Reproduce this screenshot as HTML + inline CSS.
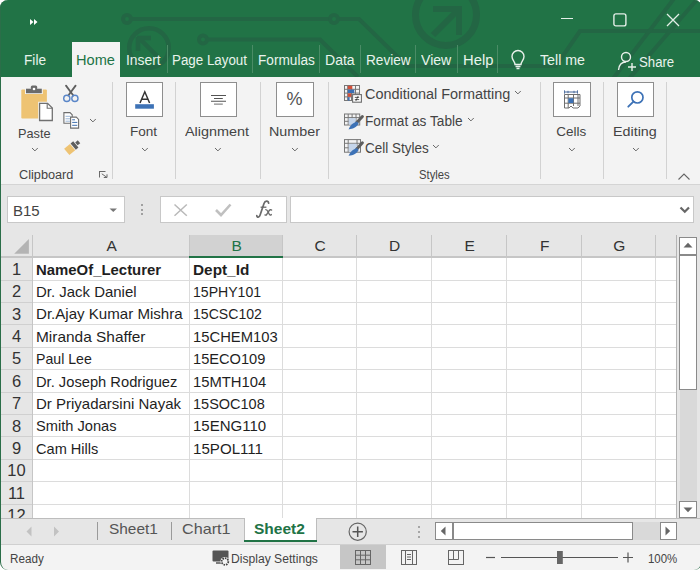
<!DOCTYPE html>
<html><head><meta charset="utf-8">
<style>
html,body{margin:0;padding:0;width:700px;height:572px;overflow:hidden;background:#fff;}
body{position:relative;font-family:"Liberation Sans",sans-serif;}
.a{position:absolute;white-space:nowrap;}
#win{position:absolute;left:0;top:0;width:702px;height:570px;border-radius:8px;overflow:hidden;background:#f3f3f3;}
#wb{position:absolute;left:0;top:0;width:702px;height:570px;border-radius:8px;border-left:1.2px solid #2b6e49;border-right:1.2px solid #2b6e49;box-sizing:border-box;}
svg{position:absolute;overflow:visible;}
</style></head><body><div id="win">
<div class="a" style="left:0px;top:0px;width:700px;height:77px;background:#217346;"></div>
<svg style="left:0;top:0;overflow:hidden" width="700" height="77" viewBox="0 0 700 77">
<g fill="none" stroke="#236644" stroke-width="4">
<circle cx="127" cy="19" r="4"/>
<path d="M131 19 H330 M338 19 H359 L407 66 H556 L580 31 H700"/>
<circle cx="334" cy="19" r="4"/>
<circle cx="203" cy="39.5" r="4"/>
<path d="M207 39.5 H320 L358 77"/>
<circle cx="149" cy="48" r="19.8" stroke-width="4.5"/>
<path d="M139 38 L160 59 M137 38 H151 M138 37 V51" stroke-width="4.5"/>
<circle cx="446" cy="15" r="30.5" stroke-width="7"/>
<path d="M459 9 L433 35 M462 9 H433 M459 6 V35" stroke-width="6"/>
<path d="M612 80 L676 -4 M628 80 L700 -4"/>
</g></svg>
<svg style="left:30px;top:19px" width="8" height="6" viewBox="0 0 8 6"><path d="M0 0 L3.5 3 L0 6Z M4 0 L7.5 3 L4 6Z" fill="#fff"/></svg>
<div class="a" style="left:561px;top:17.5px;width:12px;height:1.3px;background:#e3eee7;"></div>
<svg style="left:613px;top:13px" width="14" height="14" viewBox="0 0 14 14"><rect x="0.9" y="0.9" width="12" height="12" rx="2" fill="none" stroke="#e3eee7" stroke-width="1.4"/></svg>
<svg style="left:666px;top:13px" width="14" height="14" viewBox="0 0 14 14"><path d="M1 1 L13 13 M13 1 L1 13" stroke="#e3eee7" stroke-width="1.3"/></svg>
<div class="a" style="left:72px;top:42px;width:48px;height:36px;background:#f3f3f3;"></div>
<div class="a" style="left:23.70px;top:50.87px;font-size:14px;line-height:18px;color:#e9f3ed;transform:scaleX(0.9760);transform-origin:0 0;">File</div>
<div class="a" style="left:76.00px;top:50.87px;font-size:14px;line-height:18px;color:#217346;transform:scaleX(1.0420);transform-origin:0 0;">Home</div>
<div class="a" style="left:125.80px;top:50.87px;font-size:14px;line-height:18px;color:#e9f3ed;transform:scaleX(0.9880);transform-origin:0 0;">Insert</div>
<div class="a" style="left:172.00px;top:50.87px;font-size:14px;line-height:18px;color:#e9f3ed;transform:scaleX(0.9540);transform-origin:0 0;">Page Layout</div>
<div class="a" style="left:257.70px;top:50.87px;font-size:14px;line-height:18px;color:#e9f3ed;transform:scaleX(0.9750);transform-origin:0 0;">Formulas</div>
<div class="a" style="left:325.30px;top:50.87px;font-size:14px;line-height:18px;color:#e9f3ed;transform:scaleX(1.0030);transform-origin:0 0;">Data</div>
<div class="a" style="left:365.90px;top:50.87px;font-size:14px;line-height:18px;color:#e9f3ed;transform:scaleX(0.9730);transform-origin:0 0;">Review</div>
<div class="a" style="left:420.70px;top:50.87px;font-size:14px;line-height:18px;color:#e9f3ed;transform:scaleX(1.0070);transform-origin:0 0;">View</div>
<div class="a" style="left:462.50px;top:50.87px;font-size:14px;line-height:18px;color:#e9f3ed;transform:scaleX(1.0560);transform-origin:0 0;">Help</div>
<div class="a" style="left:540.00px;top:50.87px;font-size:14px;line-height:18px;color:#e9f3ed;transform:scaleX(1.0140);transform-origin:0 0;">Tell me</div>
<div class="a" style="left:638.70px;top:52.77px;font-size:14px;line-height:18px;color:#e9f3ed;transform:scaleX(0.9420);transform-origin:0 0;">Share</div>
<div class="a" style="left:167px;top:45px;width:1px;height:28px;background:#4a8c66;"></div>
<div class="a" style="left:252px;top:45px;width:1px;height:28px;background:#4a8c66;"></div>
<div class="a" style="left:319px;top:45px;width:1px;height:28px;background:#4a8c66;"></div>
<div class="a" style="left:360px;top:45px;width:1px;height:28px;background:#4a8c66;"></div>
<div class="a" style="left:415px;top:45px;width:1px;height:28px;background:#4a8c66;"></div>
<div class="a" style="left:457px;top:45px;width:1px;height:28px;background:#4a8c66;"></div>
<div class="a" style="left:497px;top:45px;width:1px;height:28px;background:#4a8c66;"></div>
<svg style="left:510px;top:50px" width="16" height="20" viewBox="0 0 16 20"><path d="M5 14.5 C5 11.5 2 10 2 6.5 A6 6 0 0 1 14 6.5 C14 10 11 11.5 11 14.5 Z M5.5 16.5 H10.5 M6.5 18.5 H9.5" fill="none" stroke="#e8f0ea" stroke-width="1.4"/></svg>
<svg style="left:617px;top:51px" width="20" height="20" viewBox="0 0 20 20"><circle cx="9" cy="6" r="4.5" fill="none" stroke="#e8f0ea" stroke-width="1.4"/><path d="M1.5 19 C2 14 5 11 9 11" fill="none" stroke="#e8f0ea" stroke-width="1.4"/><path d="M15 12 V20 M11 16 H19" stroke="#e8f0ea" stroke-width="1.4"/></svg>
<div class="a" style="left:0px;top:77px;width:700px;height:107px;background:#f3f3f3;"></div>
<div class="a" style="left:0px;top:184px;width:700px;height:1px;background:#d4d4d4;"></div>
<div class="a" style="left:112px;top:82px;width:1px;height:97px;background:#d2d2d2;"></div>
<div class="a" style="left:175px;top:82px;width:1px;height:97px;background:#d2d2d2;"></div>
<div class="a" style="left:260px;top:82px;width:1px;height:97px;background:#d2d2d2;"></div>
<div class="a" style="left:328px;top:82px;width:1px;height:97px;background:#d2d2d2;"></div>
<div class="a" style="left:540px;top:82px;width:1px;height:97px;background:#d2d2d2;"></div>
<div class="a" style="left:603px;top:82px;width:1px;height:97px;background:#d2d2d2;"></div>
<div class="a" style="left:666px;top:82px;width:1px;height:97px;background:#d2d2d2;"></div>
<div class="a" style="left:126px;top:82px;width:37px;height:35px;background:#fff;border:1px solid #8e8e8e;box-sizing:border-box;"></div>
<div class="a" style="left:200px;top:82px;width:37px;height:35px;background:#fff;border:1px solid #8e8e8e;box-sizing:border-box;"></div>
<div class="a" style="left:276px;top:82px;width:38px;height:35px;background:#fff;border:1px solid #8e8e8e;box-sizing:border-box;"></div>
<div class="a" style="left:553px;top:82px;width:38px;height:35px;background:#fff;border:1px solid #8e8e8e;box-sizing:border-box;"></div>
<div class="a" style="left:617px;top:82px;width:37px;height:35px;background:#fff;border:1px solid #8e8e8e;box-sizing:border-box;"></div>
<div class="a" style="left:17.90px;top:124.64px;font-size:13.5px;line-height:17px;color:#444444;transform:scaleX(0.9420);transform-origin:0 0;">Paste</div>
<div class="a" style="left:130.20px;top:123.14px;font-size:13.5px;line-height:17px;color:#444444;transform:scaleX(1.0040);transform-origin:0 0;">Font</div>
<div class="a" style="left:185.00px;top:123.34px;font-size:13.5px;line-height:17px;color:#444444;transform:scaleX(1.0670);transform-origin:0 0;">Alignment</div>
<div class="a" style="left:268.90px;top:123.34px;font-size:13.5px;line-height:17px;color:#444444;transform:scaleX(1.0600);transform-origin:0 0;">Number</div>
<div class="a" style="left:556.30px;top:123.24px;font-size:13.5px;line-height:17px;color:#444444;transform:scaleX(1.0000);transform-origin:0 0;">Cells</div>
<div class="a" style="left:612.80px;top:123.24px;font-size:13.5px;line-height:17px;color:#444444;transform:scaleX(1.0600);transform-origin:0 0;">Editing</div>
<div class="a" style="left:365.40px;top:85.27px;font-size:14px;line-height:18px;color:#444444;transform:scaleX(1.0310);transform-origin:0 0;">Conditional Formatting</div>
<div class="a" style="left:365.40px;top:112.07px;font-size:14px;line-height:18px;color:#444444;transform:scaleX(0.9750);transform-origin:0 0;">Format as Table</div>
<div class="a" style="left:365.40px;top:138.97px;font-size:14px;line-height:18px;color:#444444;transform:scaleX(0.9620);transform-origin:0 0;">Cell Styles</div>
<div class="a" style="left:19.00px;top:167.27px;font-size:12.5px;line-height:16px;color:#444444;transform:scaleX(1.0170);transform-origin:0 0;">Clipboard</div>
<div class="a" style="left:418.50px;top:167.27px;font-size:12.5px;line-height:16px;color:#444444;transform:scaleX(0.9000);transform-origin:0 0;">Styles</div>
<svg style="left:30.700000000000003px;top:147.05px" width="7.8" height="4.9" viewBox="-3.9 -2.45 7.8 4.9"><path d="M-2.9 -1.45 L0 1.45 L2.9 -1.45" fill="none" stroke="#666" stroke-width="1"/></svg>
<svg style="left:140.5px;top:147.05px" width="7.8" height="4.9" viewBox="-3.9 -2.45 7.8 4.9"><path d="M-2.9 -1.45 L0 1.45 L2.9 -1.45" fill="none" stroke="#666" stroke-width="1"/></svg>
<svg style="left:214.1px;top:147.05px" width="7.8" height="4.9" viewBox="-3.9 -2.45 7.8 4.9"><path d="M-2.9 -1.45 L0 1.45 L2.9 -1.45" fill="none" stroke="#666" stroke-width="1"/></svg>
<svg style="left:290.6px;top:147.05px" width="7.8" height="4.9" viewBox="-3.9 -2.45 7.8 4.9"><path d="M-2.9 -1.45 L0 1.45 L2.9 -1.45" fill="none" stroke="#666" stroke-width="1"/></svg>
<svg style="left:568.1px;top:147.05px" width="7.8" height="4.9" viewBox="-3.9 -2.45 7.8 4.9"><path d="M-2.9 -1.45 L0 1.45 L2.9 -1.45" fill="none" stroke="#666" stroke-width="1"/></svg>
<svg style="left:631.6px;top:147.05px" width="7.8" height="4.9" viewBox="-3.9 -2.45 7.8 4.9"><path d="M-2.9 -1.45 L0 1.45 L2.9 -1.45" fill="none" stroke="#666" stroke-width="1"/></svg>
<svg style="left:89.39999999999999px;top:117.95px" width="7.8" height="4.9" viewBox="-3.9 -2.45 7.8 4.9"><path d="M-2.9 -1.45 L0 1.45 L2.9 -1.45" fill="none" stroke="#666" stroke-width="1"/></svg>
<svg style="left:513.8000000000001px;top:90.25px" width="7.8" height="4.9" viewBox="-3.9 -2.45 7.8 4.9"><path d="M-2.9 -1.45 L0 1.45 L2.9 -1.45" fill="none" stroke="#666" stroke-width="1"/></svg>
<svg style="left:466.70000000000005px;top:117.05px" width="7.8" height="4.9" viewBox="-3.9 -2.45 7.8 4.9"><path d="M-2.9 -1.45 L0 1.45 L2.9 -1.45" fill="none" stroke="#666" stroke-width="1"/></svg>
<svg style="left:432.40000000000003px;top:144.05px" width="7.8" height="4.9" viewBox="-3.9 -2.45 7.8 4.9"><path d="M-2.9 -1.45 L0 1.45 L2.9 -1.45" fill="none" stroke="#666" stroke-width="1"/></svg>
<svg style="left:677px;top:172px" width="14" height="9" viewBox="0 0 14 9"><path d="M1.5 7.5 L7 2 L12.5 7.5" fill="none" stroke="#666" stroke-width="1.1"/></svg>
<svg style="left:0;top:0" width="120" height="180" viewBox="0 0 120 180">
<rect x="21.3" y="89.4" width="25.6" height="29.2" rx="1" fill="#eec373"/>
<rect x="25" y="87.7" width="17.8" height="6.3" fill="#f3f3f3"/>
<rect x="26" y="88.7" width="15.8" height="4.5" fill="#6b6b6b"/>
<rect x="30.8" y="85.6" width="6.4" height="4" rx="1.5" fill="#6b6b6b"/>
<circle cx="34" cy="89" r="1.3" fill="#fff"/>
<path d="M38.2 101.8 H48 L53.8 107.6 V122 H38.2 Z" fill="#f3f3f3"/>
<path d="M39.6 103.3 H47.6 L52.3 108 V120.5 H39.6 Z" fill="#fff" stroke="#707070" stroke-width="1.3"/>
<path d="M47.2 103.3 V108.3 H52.3" fill="none" stroke="#707070" stroke-width="1.1"/>
<g stroke="#5f5f5f" stroke-linecap="round">
<path d="M66 85.6 L73.3 95.5" stroke-width="1.8"/>
<path d="M75.6 85.6 L68.3 95.5" stroke-width="1.8"/>
</g>
<circle cx="66.8" cy="98.4" r="3.1" fill="none" stroke="#5a86c8" stroke-width="1.4"/>
<circle cx="74.9" cy="98.4" r="3.1" fill="none" stroke="#5a86c8" stroke-width="1.4"/>
<path d="M63.9 112.6 H70 L72.2 114.8 V123.3 H63.9 Z" fill="#fff" stroke="#6e6e6e" stroke-width="1.1"/>
<path d="M65.5 116.3 H70.5 M65.5 118.8 H70.5 M65.5 121.2 H70" stroke="#9ab6d6" stroke-width="1"/>
<path d="M70.6 117.1 H76.3 L78.6 119.4 V128.1 H70.6 Z" fill="#fff" stroke="#6e6e6e" stroke-width="1.1"/>
<path d="M72.2 119.8 H75 M72.2 122.4 H77.3 M72.2 125.3 H77.3" stroke="#3f6fae" stroke-width="1"/>
<g transform="translate(2.2 -1.4) rotate(-40 72 147)">
<rect x="62.2" y="143" width="7.6" height="8.2" fill="#eec373"/>
<rect x="70.6" y="143" width="3.4" height="8.2" fill="#5f5f5f"/>
<rect x="74.8" y="145.2" width="3.4" height="3.8" fill="#5f5f5f"/>
</g>
<path d="M99 171.5 H105.5 M99.5 171.5 V177.5 M101.8 173.8 L106.8 177.3 M107 174.3 V177.5 H103.8" fill="none" stroke="#6a6a6a" stroke-width="1"/>
</svg>
<svg style="left:0;top:0" width="700" height="180" viewBox="0 0 700 180">
<path d="M140 103 L144.8 91.8 L149.6 103 M141.7 99.2 H147.9" fill="none" stroke="#333" stroke-width="1.5"/>
<rect x="135.2" y="104.2" width="18.7" height="4.5" fill="#3d72b6"/>
<g stroke="#555" stroke-width="1.1">
<path d="M211 95.5 H226 M214 98.5 H222.8 M211 101.3 H226"/>
<path d="M214 104.1 H222.8" stroke="#888"/>
</g>
<g fill="none" stroke="#777" stroke-width="1">
<rect x="344.5" y="85.5" width="15" height="15"/>
<path d="M344.5 89.3 H359.5 M344.5 93.1 H359.5 M344.5 96.9 H352 M347.7 85.5 V100.5 M351.5 85.5 V100.5 M355.5 85.5 V94"/>
</g>
<rect x="347.8" y="85.8" width="4.5" height="3.4" fill="#d24f3a"/>
<rect x="347.8" y="89.6" width="6.5" height="3.4" fill="#3c6fb4"/>
<rect x="347.8" y="93.4" width="3.5" height="3.4" fill="#d24f3a"/>
<rect x="347.8" y="97.2" width="1.8" height="3.4" fill="#3c6fb4"/>
<rect x="352.6" y="94.6" width="8.8" height="7.6" fill="#fff" stroke="#6e6e6e" stroke-width="1.1"/>
<path d="M354.8 97.4 H359.2 M354.8 99.6 H359.2 M358.2 96 L355.8 101" stroke="#333" stroke-width="0.8"/>
<g fill="none" stroke="#777" stroke-width="1">
<rect x="344.5" y="114" width="15.2" height="11"/>
<path d="M344.5 117.6 H359.7 M344.5 121.3 H357 M348.2 114 V125 M352.1 114 V125 M356 114 V123"/>
</g>
<rect x="348.7" y="118.1" width="7" height="6.5" fill="#c5d5ea"/>
<path d="M362.4 116.6 L356.6 122.8" stroke="#5e5e5e" stroke-width="3" stroke-linecap="round"/>
<path d="M357 121.6 C352 123.4 350.2 125.6 348.6 129.4 C353.4 128.8 357 127.2 358.6 123.6 Z" fill="#3d72b6"/>
<g fill="none" stroke="#777" stroke-width="1">
<rect x="344.5" y="139.6" width="16" height="12.6"/>
<path d="M344.5 143.3 H360.5 M344.5 147.8 H357 M348.2 139.6 V152.2 M357 139.6 V146"/>
</g>
<rect x="348.7" y="143.8" width="8" height="8" fill="#c5d5ea"/>
<path d="M362.4 142.8 L356.6 149.2" stroke="#5e5e5e" stroke-width="3" stroke-linecap="round"/>
<path d="M357 148 C352 149.8 350.2 152 348.6 155.8 C353.4 155.2 357 153.6 358.6 150 Z" fill="#3d72b6"/>
<g fill="none" stroke="#6e6e6e" stroke-width="1">
<path d="M564.5 94.5 H580 V106 L578 108 H573 L571 106 L569 108 H564.5 Z"/>
<path d="M564.5 98 H580 M564.5 103.2 H580 M568.2 94.5 V108 M573.5 94.5 V106 M578 94.5 V106"/>
</g>
<rect x="568.4" y="98.2" width="5" height="4.8" fill="#3d72b6"/>
<path d="M564.5 92 H577.5" stroke="#46689a" stroke-width="1"/>
<path d="M564.5 90.3 V93.7 M568 90.8 V93.2 M574 90.8 V93.2 M577.5 90.3 V93.7" stroke="#46689a" stroke-width="0.9"/>
<circle cx="637.4" cy="97.4" r="5.6" fill="none" stroke="#3d72b6" stroke-width="1.7"/>
<path d="M633.4 101.6 L628.3 106.7" stroke="#3d72b6" stroke-width="1.9" stroke-linecap="round"/>
</svg>
<div class="a" style="left:286.5px;top:89px;font-size:18px;line-height:20px;color:#555">%</div>
<div class="a" style="left:0px;top:185px;width:700px;height:50px;background:#e6e6e6;"></div>
<div class="a" style="left:7px;top:196px;width:118px;height:27px;background:#fff;border:1px solid #c8c8c8;box-sizing:border-box;"></div>
<div class="a" style="left:12.70px;top:200.98px;font-size:15.5px;line-height:19px;color:#444;transform:scaleX(0.9690);transform-origin:0 0;">B15</div>
<svg style="left:109px;top:208px" width="9" height="5" viewBox="0 0 9 5"><path d="M0.5 0.5 H8 L4.25 4 Z" fill="#777"/></svg>
<div class="a" style="left:141px;top:204px;width:2.4px;height:2.4px;background:#a0a0a0;"></div>
<div class="a" style="left:141px;top:208.5px;width:2.4px;height:2.4px;background:#a0a0a0;"></div>
<div class="a" style="left:141px;top:213px;width:2.4px;height:2.4px;background:#a0a0a0;"></div>
<div class="a" style="left:160px;top:196px;width:127px;height:27px;background:#fff;border:1px solid #c8c8c8;box-sizing:border-box;"></div>
<svg style="left:160px;top:196px" width="130" height="27" viewBox="160 196 130 27">
<path d="M174.5 204.5 L186.8 215.7 M186.8 204.5 L174.5 215.7" stroke="#b9b9b9" stroke-width="1.5"/>
<path d="M216 210 L221 215 L230.5 204.5" fill="none" stroke="#c0c0c0" stroke-width="2.6"/>
</svg>
<svg style="left:250px;top:198px" width="26" height="22" viewBox="250 198 26 22"><path d="M268.6 203.2 C268.4 200.6 265 200.4 264 203.5 L260.2 214.8 C259.4 217.6 257 217.8 256.8 215.6" fill="none" stroke="#6a6a6a" stroke-width="1.7" stroke-linecap="round"/><path d="M260.6 207.2 H266.4" stroke="#6a6a6a" stroke-width="1.3"/><path d="M265.8 209.6 C267.5 209.6 268 212 269.5 214.5 C270 215.3 270.6 215.2 271.3 214.6 M271.6 210 C270.8 209.3 269.8 209.6 268.6 211.4 L266.6 214.6 C266.2 215.3 265.5 215.3 265 214.9" fill="none" stroke="#6a6a6a" stroke-width="1.4" stroke-linecap="round"/></svg>
<div class="a" style="left:290px;top:196px;width:404px;height:27px;background:#fff;border:1px solid #c8c8c8;box-sizing:border-box;"></div>
<svg style="left:679px;top:206px" width="12" height="8" viewBox="0 0 12 8"><path d="M1.5 1.5 L5.8 5.8 L10 1.5" fill="none" stroke="#666" stroke-width="2.2"/></svg>
<div class="a" style="left:1px;top:235px;width:676px;height:283px;background:#fff;"></div>
<div class="a" style="left:1px;top:235px;width:676px;height:21px;background:#e6e6e6;"></div>
<div class="a" style="left:189px;top:235px;width:93px;height:21px;background:#d2d2d2;"></div>
<div class="a" style="left:1px;top:256px;width:676px;height:2px;background:#c6c6c6;"></div>
<div class="a" style="left:189px;top:256px;width:94px;height:2px;background:#217346;"></div>
<div class="a" style="left:1px;top:258px;width:31px;height:260px;background:#e6e6e6;"></div>
<div class="a" style="left:32px;top:235px;width:1px;height:283px;background:#c6c6c6;"></div>
<div class="a" style="left:189px;top:235px;width:1px;height:21px;background:#c6c6c6;"></div>
<div class="a" style="left:189px;top:258px;width:1px;height:260px;background:#dcdcdc;"></div>
<div class="a" style="left:282px;top:235px;width:1px;height:21px;background:#c6c6c6;"></div>
<div class="a" style="left:282px;top:258px;width:1px;height:260px;background:#dcdcdc;"></div>
<div class="a" style="left:356px;top:235px;width:1px;height:21px;background:#c6c6c6;"></div>
<div class="a" style="left:356px;top:258px;width:1px;height:260px;background:#dcdcdc;"></div>
<div class="a" style="left:431px;top:235px;width:1px;height:21px;background:#c6c6c6;"></div>
<div class="a" style="left:431px;top:258px;width:1px;height:260px;background:#dcdcdc;"></div>
<div class="a" style="left:506px;top:235px;width:1px;height:21px;background:#c6c6c6;"></div>
<div class="a" style="left:506px;top:258px;width:1px;height:260px;background:#dcdcdc;"></div>
<div class="a" style="left:581px;top:235px;width:1px;height:21px;background:#c6c6c6;"></div>
<div class="a" style="left:581px;top:258px;width:1px;height:260px;background:#dcdcdc;"></div>
<div class="a" style="left:655px;top:235px;width:1px;height:21px;background:#c6c6c6;"></div>
<div class="a" style="left:655px;top:258px;width:1px;height:260px;background:#dcdcdc;"></div>
<div class="a" style="left:1px;top:280px;width:31px;height:1px;background:#d0d0d0;"></div>
<div class="a" style="left:33px;top:280px;width:644px;height:1px;background:#dcdcdc;"></div>
<div class="a" style="left:1px;top:302px;width:31px;height:1px;background:#d0d0d0;"></div>
<div class="a" style="left:33px;top:302px;width:644px;height:1px;background:#dcdcdc;"></div>
<div class="a" style="left:1px;top:324px;width:31px;height:1px;background:#d0d0d0;"></div>
<div class="a" style="left:33px;top:324px;width:644px;height:1px;background:#dcdcdc;"></div>
<div class="a" style="left:1px;top:347px;width:31px;height:1px;background:#d0d0d0;"></div>
<div class="a" style="left:33px;top:347px;width:644px;height:1px;background:#dcdcdc;"></div>
<div class="a" style="left:1px;top:369px;width:31px;height:1px;background:#d0d0d0;"></div>
<div class="a" style="left:33px;top:369px;width:644px;height:1px;background:#dcdcdc;"></div>
<div class="a" style="left:1px;top:392px;width:31px;height:1px;background:#d0d0d0;"></div>
<div class="a" style="left:33px;top:392px;width:644px;height:1px;background:#dcdcdc;"></div>
<div class="a" style="left:1px;top:414px;width:31px;height:1px;background:#d0d0d0;"></div>
<div class="a" style="left:33px;top:414px;width:644px;height:1px;background:#dcdcdc;"></div>
<div class="a" style="left:1px;top:436px;width:31px;height:1px;background:#d0d0d0;"></div>
<div class="a" style="left:33px;top:436px;width:644px;height:1px;background:#dcdcdc;"></div>
<div class="a" style="left:1px;top:459px;width:31px;height:1px;background:#d0d0d0;"></div>
<div class="a" style="left:33px;top:459px;width:644px;height:1px;background:#dcdcdc;"></div>
<div class="a" style="left:1px;top:481px;width:31px;height:1px;background:#d0d0d0;"></div>
<div class="a" style="left:33px;top:481px;width:644px;height:1px;background:#dcdcdc;"></div>
<div class="a" style="left:1px;top:504px;width:31px;height:1px;background:#d0d0d0;"></div>
<div class="a" style="left:33px;top:504px;width:644px;height:1px;background:#dcdcdc;"></div>
<div class="a" style="left:676px;top:235px;width:1px;height:283px;background:#b4b4b4;"></div>
<div class="a" style="left:677px;top:235px;width:1px;height:283px;background:#e6e6e6;"></div>
<svg style="left:13px;top:238px" width="17" height="17" viewBox="13 238 17 17"><path d="M14.2 253.8 L28.9 239.1 V253.8 Z" fill="#b4b4b4"/></svg>
<div class="a" style="left:91.7px;top:238px;width:40px;text-align:center;font-size:15.5px;line-height:16px;color:#333">A</div>
<div class="a" style="left:216.7px;top:238px;width:40px;text-align:center;font-size:15.5px;line-height:16px;color:#217346">B</div>
<div class="a" style="left:300.2px;top:238px;width:40px;text-align:center;font-size:15.5px;line-height:16px;color:#333">C</div>
<div class="a" style="left:374.7px;top:238px;width:40px;text-align:center;font-size:15.5px;line-height:16px;color:#333">D</div>
<div class="a" style="left:449.7px;top:238px;width:40px;text-align:center;font-size:15.5px;line-height:16px;color:#333">E</div>
<div class="a" style="left:524.7px;top:238px;width:40px;text-align:center;font-size:15.5px;line-height:16px;color:#333">F</div>
<div class="a" style="left:599.2px;top:238px;width:40px;text-align:center;font-size:15.5px;line-height:16px;color:#333">G</div>
<div class="a" style="left:1px;top:260.7px;width:31px;text-align:center;font-size:16.5px;line-height:17px;color:#333">1</div>
<div class="a" style="left:1px;top:283.1px;width:31px;text-align:center;font-size:16.5px;line-height:17px;color:#333">2</div>
<div class="a" style="left:1px;top:305.5px;width:31px;text-align:center;font-size:16.5px;line-height:17px;color:#333">3</div>
<div class="a" style="left:1px;top:327.9px;width:31px;text-align:center;font-size:16.5px;line-height:17px;color:#333">4</div>
<div class="a" style="left:1px;top:350.3px;width:31px;text-align:center;font-size:16.5px;line-height:17px;color:#333">5</div>
<div class="a" style="left:1px;top:372.7px;width:31px;text-align:center;font-size:16.5px;line-height:17px;color:#333">6</div>
<div class="a" style="left:1px;top:395.1px;width:31px;text-align:center;font-size:16.5px;line-height:17px;color:#333">7</div>
<div class="a" style="left:1px;top:417.5px;width:31px;text-align:center;font-size:16.5px;line-height:17px;color:#333">8</div>
<div class="a" style="left:1px;top:439.9px;width:31px;text-align:center;font-size:16.5px;line-height:17px;color:#333">9</div>
<div class="a" style="left:1px;top:462.3px;width:31px;text-align:center;font-size:16.5px;line-height:17px;color:#333">10</div>
<div class="a" style="left:1px;top:484.7px;width:31px;text-align:center;font-size:16.5px;line-height:17px;color:#333">11</div>
<div class="a" style="left:1px;top:507.1px;width:31px;text-align:center;font-size:16.5px;line-height:17px;color:#333">12</div>
<div class="a" style="left:35.50px;top:260.51px;font-size:14.5px;line-height:18px;color:#1f1f1f;font-weight:bold;transform:scaleX(1.0280);transform-origin:0 0;">NameOf_Lecturer</div>
<div class="a" style="left:193.00px;top:260.51px;font-size:14.5px;line-height:18px;color:#1f1f1f;font-weight:bold;transform:scaleX(1.0590);transform-origin:0 0;">Dept_Id</div>
<div class="a" style="left:35.50px;top:282.91px;font-size:14.5px;line-height:18px;color:#1f1f1f;transform:scaleX(1.0310);transform-origin:0 0;">Dr. Jack Daniel</div>
<div class="a" style="left:193.00px;top:282.91px;font-size:14.5px;line-height:18px;color:#1f1f1f;transform:scaleX(0.9710);transform-origin:0 0;">15PHY101</div>
<div class="a" style="left:35.50px;top:305.31px;font-size:14.5px;line-height:18px;color:#1f1f1f;transform:scaleX(1.0400);transform-origin:0 0;">Dr.Ajay Kumar Mishra</div>
<div class="a" style="left:193.00px;top:305.31px;font-size:14.5px;line-height:18px;color:#1f1f1f;transform:scaleX(0.9710);transform-origin:0 0;">15CSC102</div>
<div class="a" style="left:35.50px;top:327.71px;font-size:14.5px;line-height:18px;color:#1f1f1f;transform:scaleX(1.0640);transform-origin:0 0;">Miranda Shaffer</div>
<div class="a" style="left:193.00px;top:327.71px;font-size:14.5px;line-height:18px;color:#1f1f1f;transform:scaleX(1.0200);transform-origin:0 0;">15CHEM103</div>
<div class="a" style="left:35.50px;top:350.11px;font-size:14.5px;line-height:18px;color:#1f1f1f;transform:scaleX(0.9750);transform-origin:0 0;">Paul Lee</div>
<div class="a" style="left:193.00px;top:350.11px;font-size:14.5px;line-height:18px;color:#1f1f1f;transform:scaleX(1.0090);transform-origin:0 0;">15ECO109</div>
<div class="a" style="left:35.50px;top:372.51px;font-size:14.5px;line-height:18px;color:#1f1f1f;transform:scaleX(1.0140);transform-origin:0 0;">Dr. Joseph Rodriguez</div>
<div class="a" style="left:193.00px;top:372.51px;font-size:14.5px;line-height:18px;color:#1f1f1f;transform:scaleX(1.0210);transform-origin:0 0;">15MTH104</div>
<div class="a" style="left:35.50px;top:394.91px;font-size:14.5px;line-height:18px;color:#1f1f1f;transform:scaleX(1.0340);transform-origin:0 0;">Dr Priyadarsini Nayak</div>
<div class="a" style="left:193.00px;top:394.91px;font-size:14.5px;line-height:18px;color:#1f1f1f;transform:scaleX(1.0000);transform-origin:0 0;">15SOC108</div>
<div class="a" style="left:35.50px;top:417.31px;font-size:14.5px;line-height:18px;color:#1f1f1f;transform:scaleX(1.0090);transform-origin:0 0;">Smith Jonas</div>
<div class="a" style="left:193.00px;top:417.31px;font-size:14.5px;line-height:18px;color:#1f1f1f;transform:scaleX(1.0350);transform-origin:0 0;">15ENG110</div>
<div class="a" style="left:35.50px;top:439.71px;font-size:14.5px;line-height:18px;color:#1f1f1f;transform:scaleX(1.0050);transform-origin:0 0;">Cam Hills</div>
<div class="a" style="left:193.00px;top:439.71px;font-size:14.5px;line-height:18px;color:#1f1f1f;transform:scaleX(1.0420);transform-origin:0 0;">15POL111</div>
<div class="a" style="left:678px;top:235px;width:22px;height:283px;background:#e6e6e6;"></div>
<div class="a" style="left:679px;top:237px;width:18px;height:18px;background:#fff;border:1px solid #8a8a8a;box-sizing:border-box;"></div>
<svg style="left:683px;top:242px" width="10" height="6" viewBox="0 0 10 6"><path d="M0.5 5.5 H9.5 L5 0.8 Z" fill="#666"/></svg>
<div class="a" style="left:680px;top:254px;width:17px;height:248px;background:#d9d9d9;"></div>
<div class="a" style="left:679px;top:254px;width:18px;height:136px;background:#fff;border:1px solid #8a8a8a;box-sizing:border-box;"></div>
<div class="a" style="left:679px;top:254px;width:18px;height:2px;background:#8a8a8a;"></div>
<div class="a" style="left:679px;top:501px;width:18px;height:17px;background:#fff;border:1px solid #8a8a8a;box-sizing:border-box;"></div>
<svg style="left:683px;top:507px" width="10" height="6" viewBox="0 0 10 6"><path d="M0.5 0.5 H9.5 L5 5.2 Z" fill="#666"/></svg>
<div class="a" style="left:0px;top:518px;width:700px;height:27px;background:#e6e6e6;"></div>
<div class="a" style="left:0px;top:518px;width:700px;height:1px;background:#bdbdbd;"></div>
<svg style="left:24px;top:526px" width="40" height="11" viewBox="24 526 40 11"><path d="M31.5 526.5 L26.5 531.5 L31.5 536.5 Z M54 526.5 L59 531.5 L54 536.5 Z" fill="#c2c2c2"/></svg>
<div class="a" style="left:97px;top:522px;width:1px;height:18px;background:#9a9a9a;"></div>
<div class="a" style="left:171px;top:522px;width:1px;height:18px;background:#9a9a9a;"></div>
<div class="a" style="left:244px;top:518px;width:73px;height:23px;background:#fff;"></div>
<div class="a" style="left:244px;top:518px;width:1px;height:23px;background:#bdbdbd;"></div>
<div class="a" style="left:316px;top:518px;width:1px;height:23px;background:#bdbdbd;"></div>
<div class="a" style="left:244px;top:540px;width:73px;height:2px;background:#217346;"></div>
<div class="a" style="left:108.50px;top:519.34px;font-size:15px;line-height:19px;color:#555;transform:scaleX(1.0280);transform-origin:0 0;">Sheet1</div>
<div class="a" style="left:182.20px;top:519.34px;font-size:15px;line-height:19px;color:#555;transform:scaleX(1.0770);transform-origin:0 0;">Chart1</div>
<div class="a" style="left:254.40px;top:519.14px;font-size:15px;line-height:19px;color:#217346;font-weight:bold;transform:scaleX(1.0330);transform-origin:0 0;">Sheet2</div>
<svg style="left:347px;top:521px" width="22" height="22" viewBox="347 521 22 22"><circle cx="357.7" cy="531.7" r="8.6" fill="none" stroke="#666" stroke-width="1.2"/><path d="M357.7 526.5 V536.9 M352.5 531.7 H362.9" stroke="#555" stroke-width="1.5"/></svg>
<div class="a" style="left:418.3px;top:525.5px;width:2.2px;height:2.2px;background:#a6a6a6;"></div>
<div class="a" style="left:418.3px;top:530.5px;width:2.2px;height:2.2px;background:#a6a6a6;"></div>
<div class="a" style="left:418.3px;top:535.5px;width:2.2px;height:2.2px;background:#a6a6a6;"></div>
<div class="a" style="left:435px;top:522px;width:18px;height:18px;background:#fff;border:1px solid #8a8a8a;box-sizing:border-box;"></div>
<svg style="left:440px;top:526px" width="6" height="10" viewBox="0 0 6 10"><path d="M5.5 0.5 V9.5 L0.8 5 Z" fill="#666"/></svg>
<div class="a" style="left:452px;top:522px;width:181px;height:18px;background:#fff;border:1px solid #8a8a8a;box-sizing:border-box;"></div>
<div class="a" style="left:452px;top:522px;width:2px;height:18px;background:#8a8a8a;"></div>
<div class="a" style="left:633px;top:522px;width:27px;height:18px;background:#d9d9d9;"></div>
<div class="a" style="left:660px;top:522px;width:17px;height:18px;background:#fff;border:1px solid #8a8a8a;box-sizing:border-box;"></div>
<svg style="left:665px;top:526px" width="6" height="10" viewBox="0 0 6 10"><path d="M0.5 0.5 V9.5 L5.2 5 Z" fill="#666"/></svg>
<div class="a" style="left:0px;top:545px;width:700px;height:24px;background:#f3f3f3;"></div>
<div class="a" style="left:0px;top:544px;width:700px;height:1px;background:#d0d0d0;"></div>
<div class="a" style="left:9.70px;top:551.17px;font-size:12.5px;line-height:16px;color:#444;transform:scaleX(0.9340);transform-origin:0 0;">Ready</div>
<div class="a" style="left:230.60px;top:550.97px;font-size:12.5px;line-height:16px;color:#444;transform:scaleX(0.9700);transform-origin:0 0;">Display Settings</div>
<div class="a" style="left:647.60px;top:550.97px;font-size:12.5px;line-height:16px;color:#444;transform:scaleX(0.9160);transform-origin:0 0;">100%</div>
<div class="a" style="left:340px;top:545px;width:46px;height:24px;background:#c6c6c6;"></div>
<svg style="left:0;top:540px" width="700" height="32" viewBox="0 540 700 32">
<rect x="212.5" y="550.5" width="16" height="11" rx="1" fill="#555"/>
<path d="M216 563 H222" stroke="#555" stroke-width="1.6"/>
<circle cx="225" cy="561.5" r="4.6" fill="#f3f3f3"/>
<circle cx="225" cy="561.5" r="3.3" fill="none" stroke="#444" stroke-width="1.8" stroke-dasharray="1.6 0.9"/>
<circle cx="225" cy="561.5" r="1.2" fill="#f3f3f3"/>
<g fill="none" stroke="#666" stroke-width="1">
<rect x="355.5" y="550.5" width="15" height="14"/>
<path d="M355.5 555.2 H370.5 M355.5 559.8 H370.5 M360.5 550.5 V564.5 M365.5 550.5 V564.5"/>
<rect x="401.5" y="550.5" width="15" height="14"/>
<rect x="405.5" y="550.5" width="7" height="14"/>
<path d="M407 554.5 H411 M407 557 H411 M407 559.5 H411"/>
<rect x="448.5" y="550.5" width="15" height="14"/>
<path d="M448.5 559.5 H458.5 V550.5 M453.5 559.5 V550.5"/>
</g>
<path d="M486 557.5 H495" stroke="#555" stroke-width="1.2"/>
<path d="M501 557.5 H618" stroke="#555" stroke-width="1.2"/>
<rect x="557" y="551" width="5.8" height="13" fill="#666"/>
<path d="M623 557.5 H633 M628 552.5 V562.5" stroke="#555" stroke-width="1.2"/>
</svg>
</div><div id="wb"></div></body></html>
